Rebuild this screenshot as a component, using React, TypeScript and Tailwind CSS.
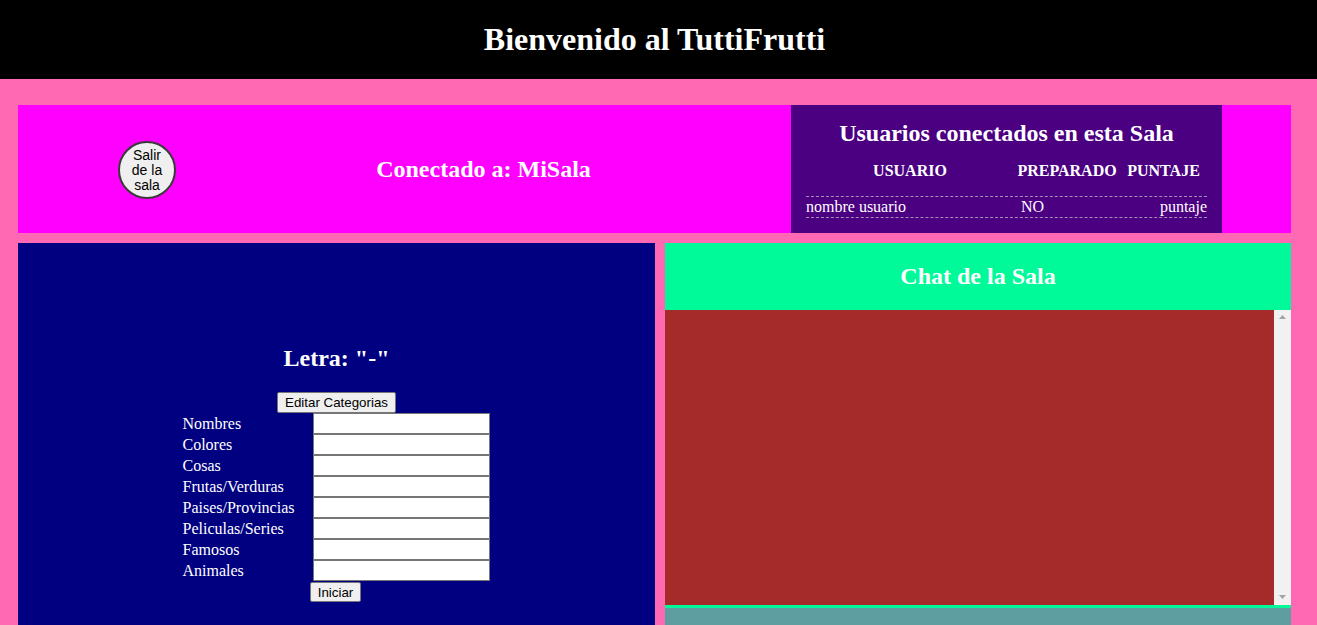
const categorias = [
  "Nombres",
  "Colores",
  "Cosas",
  "Frutas/Verduras",
  "Paises/Provincias",
  "Peliculas/Series",
  "Famosos",
  "Animales",
];

const btn =
  "bg-[#efefef] border border-[#767676] rounded-[2px] text-black font-['Liberation_Sans',Arial,sans-serif] text-[13.33px] leading-[15px]";

export default function App() {
  return (
    <div className="h-[625px] overflow-hidden bg-[#ff69b4] font-['Liberation_Serif','Times_New_Roman',serif] text-white">
      {/* header */}
      <header className="h-[79px] bg-black flex items-center justify-center pr-[8px]">
        <h1 className="text-[32px] font-bold leading-none -mt-[2px]">Bienvenido al TuttiFrutti</h1>
      </header>

      {/* sala info */}
      <section className="mt-[26px] ml-[18px] w-[1273px] h-[128px] bg-[#ff00ff] flex">
        <div className="w-[773px] flex items-center pl-[100px]">
          <button className="w-[58px] h-[58px] mt-[1px] pt-[2px] rounded-full border-2 border-[#3a3a3a] bg-[#efefef] text-black font-['Liberation_Sans',Arial,sans-serif] text-[14px] leading-[15px] flex items-center justify-center text-center">
            Salir
            <br />
            de la
            <br />
            sala
          </button>
          <div className="flex-1 flex justify-center">
            <h2 className="text-[24px] font-bold leading-none">Conectado a: MiSala</h2>
          </div>
        </div>

        <div className="w-[431px] bg-[#4b0082] flex flex-col px-[15px]">
          <div className="h-[56px] flex items-center justify-center">
            <h2 className="text-[24px] font-bold leading-none">Usuarios conectados en esta Sala</h2>
          </div>
          <div className="h-[20px] grid grid-cols-[208px_106px_87px] text-[16px] font-bold leading-[20px] text-center">
            <span>USUARIO</span>
            <span>PREPARADO</span>
            <span>PUNTAJE</span>
          </div>
          <div className="mt-[15px] h-[22px] border-y border-dashed border-[#a58fb8] grid grid-cols-[208px_106px_87px] text-[16px] leading-[20px]">
            <span>nombre usuario</span>
            <span className="pl-[7px]">NO</span>
            <span className="text-right">puntaje</span>
          </div>
        </div>
      </section>

      {/* main */}
      <section className="mt-[10px] ml-[18px] w-[1273px] flex gap-[10px]">
        <div className="w-[637px] h-[400px] bg-[#000080] flex flex-col items-center pt-[101px]">
          <h2 className="text-[24px] font-bold leading-[28px]">Letra: "-"</h2>
          <button className={`${btn} mt-[20px] h-[21px] px-[7px]`}>Editar Categorias</button>
          <div className="flex flex-col -ml-[2px]">
            {categorias.map((c) => (
              <div key={c} className="flex h-[21px]">
                <span className="w-[131px] pl-[1px] text-[16px] leading-[21px]">{c}</span>
                <input className="w-[177px] h-[21px] bg-white border border-[#767676] text-black text-[13px] px-[2px]" />
              </div>
            ))}
          </div>
          <button className={`${btn} mt-[1px] h-[20px] w-[51px] -ml-[2px]`}>Iniciar</button>
        </div>

        <div className="w-[626px] flex flex-col bg-[#00fa9a]">
          <div className="h-[67px] flex items-center justify-center pb-[2px]">
            <h2 className="text-[24px] font-bold leading-none">Chat de la Sala</h2>
          </div>
          <div className="h-[295px] flex">
            <div className="flex-1 bg-[#a52a2a]" />
            <div className="w-[17px] bg-[#f1f1f1] flex flex-col items-center justify-between py-[5px]">
              <svg width="7" height="5" viewBox="0 0 7 5">
                <path d="M3.5 0 L7 4 L0 4 Z" fill="#a3a3a3" />
              </svg>
              <svg width="7" height="5" viewBox="0 0 7 5">
                <path d="M0 0 L7 0 L3.5 4 Z" fill="#a3a3a3" />
              </svg>
            </div>
          </div>
          <div className="mt-[3px] h-[40px] bg-[#5f9ea0]" />
        </div>
      </section>
    </div>
  );
}
